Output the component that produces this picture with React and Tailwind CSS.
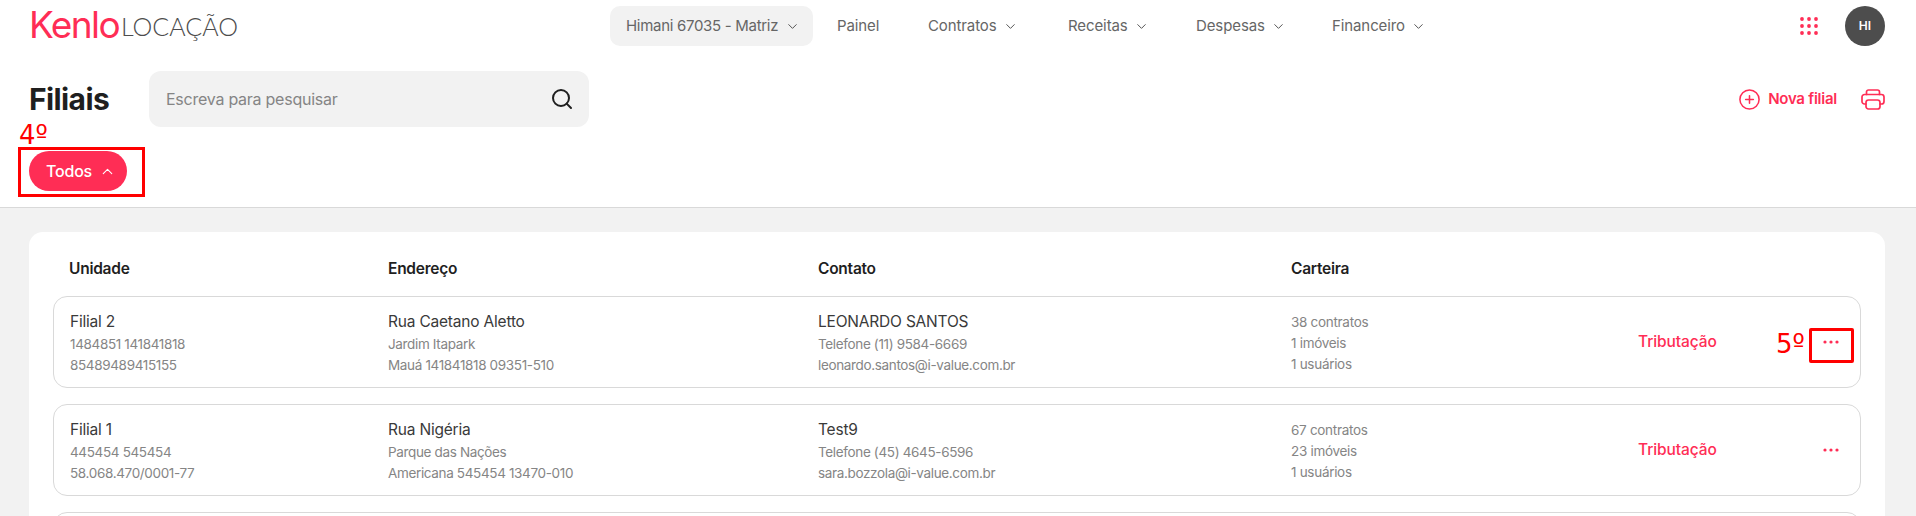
import React from "react";
import { ChevronDown, ChevronUp, Search, CirclePlus } from "lucide-react";

const rows = [
  { u: ["Filial 2", "1484851 141841818", "85489489415155"], e: ["Rua Caetano Aletto", "Jardim Itapark", "Mauá 141841818 09351-510"], c: ["LEONARDO SANTOS", "Telefone (11) 9584-6669", "leonardo.santos@i-value.com.br"], w: ["38 contratos", "1 imóveis", "1 usuários"] },
  { u: ["Filial 1", "445454 545454", "58.068.470/0001-77"], e: ["Rua Nigéria", "Parque das Nações", "Americana 545454 13470-010"], c: ["Test9", "Telefone (45) 4645-6596", "sara.bozzola@i-value.com.br"], w: ["67 contratos", "23 imóveis", "1 usuários"] },
];

const cols = "grid grid-cols-[318px_430px_473px_347px_185px_1fr] items-center";

function NavItem({ label, width, chevron = true }) {
  return (
    <div className={`flex items-center gap-[6px] text-[15px] tracking-[-0.1px] text-[#666666] ${width}`}>
      <span>{label}</span>
      {chevron && <ChevronDown size={15} strokeWidth={1.6} className="text-[#555555]" />}
    </div>
  );
}

function Stack({ lines }) {
  return (
    <div className="flex flex-col pt-[2px]">
      <span className="text-[15.5px] leading-[24px] tracking-[-0.2px] text-[#3a3a3a] whitespace-nowrap">{lines[0]}</span>
      <span className="text-[13.5px] leading-[21px] tracking-[-0.35px] text-[#858585] whitespace-nowrap">{lines[1]}</span>
      <span className="text-[13.5px] leading-[21px] tracking-[-0.35px] text-[#858585] whitespace-nowrap">{lines[2]}</span>
    </div>
  );
}

function Dots() {
  return (
    <svg width="16" height="4" viewBox="0 0 16 4" fill="#ff2d55">
      <circle cx="2" cy="2" r="1.6" />
      <circle cx="8" cy="2" r="1.6" />
      <circle cx="14" cy="2" r="1.6" />
    </svg>
  );
}

function GridDots() {
  const c = [2, 9, 16];
  return (
    <svg width="18" height="18" viewBox="0 0 18 18" fill="#ff2d55">
      {c.map((y) => c.map((x) => <circle key={`${x}-${y}`} cx={x} cy={y} r="1.9" />))}
    </svg>
  );
}

function PrinterIcon() {
  return (
    <svg width="24" height="21" viewBox="0 0 24 21" fill="none" stroke="#ff2d55" strokeWidth="1.7" strokeLinejoin="round" strokeLinecap="round">
      <path d="M5.5 5.5V3a2 2 0 0 1 2-2h9a2 2 0 0 1 2 2v2.5" />
      <path d="M5 15H3.5A2.5 2.5 0 0 1 1 12.5V8a2.5 2.5 0 0 1 2.5-2.5h17A2.5 2.5 0 0 1 23 8v4.5a2.5 2.5 0 0 1-2.5 2.5H19" />
      <rect x="5" y="11" width="14" height="9" rx="2.5" />
    </svg>
  );
}

export default function App() {
  return (
    <div className="relative h-screen overflow-hidden bg-[#f2f2f2] font-['Inter',sans-serif]">
      <div className="border-b border-[#d9d9d9] bg-white">
        <nav className="flex h-[52px] items-center pl-[29px] pr-[31px]">
          <div className="flex w-[581px] items-center pb-[3px]">
            <span className="text-[37px] font-normal leading-[40px] tracking-[-1.6px] text-[#ff2d55]">Kenlo</span>
            <span className="ml-[2px] mt-[2px] font-['Lato',sans-serif] text-[25px] font-light leading-[40px] text-[#4d4d4d]">LOCAÇÃO</span>
          </div>
          <div className="flex h-[40px] w-[203px] items-center gap-[7px] rounded-[10px] bg-[#f2f2f2] pl-[16px] text-[15px] tracking-[-0.3px] text-[#666666]">
            <span className="whitespace-nowrap">Himani 67035 - Matriz</span>
            <ChevronDown size={15} strokeWidth={1.6} className="text-[#555555]" />
          </div>
          <div className="ml-[24px] flex items-center">
            <NavItem label="Painel" width="w-[91px]" chevron={false} />
            <NavItem label="Contratos" width="w-[140px]" />
            <NavItem label="Receitas" width="w-[128px]" />
            <NavItem label="Despesas" width="w-[136px]" />
            <NavItem label="Financeiro" width="w-[100px]" />
          </div>
          <div className="ml-auto flex items-center gap-[27px]">
            <GridDots />
            <div className="flex h-[40px] w-[40px] items-center justify-center rounded-full bg-[#4d4d4d] text-[12px] font-semibold text-white">HI</div>
          </div>
        </nav>

        <div className="flex items-center pl-[29px] pr-[31px] pt-[19px]">
          <h1 className="w-[120px] text-[30px] font-bold leading-[36px] tracking-[-0.6px] text-[#1f1f1f]">Filiais</h1>
          <div className="flex h-[56px] w-[440px] items-center justify-between rounded-[12px] bg-[#f2f2f2] pl-[17px] pr-[15px]">
            <span className="text-[16px] tracking-[-0.25px] text-[#858585]">Escreva para pesquisar</span>
            <Search size={24} strokeWidth={2} className="text-[#1f1f1f]" />
          </div>
          <div className="ml-auto flex items-center text-[#ff2d55]">
            <CirclePlus size={23} strokeWidth={1.6} />
            <span className="ml-[7px] text-[15px] font-semibold tracking-[-0.25px]">Nova filial</span>
            <div className="ml-[24px]"><PrinterIcon /></div>
          </div>
        </div>

        <div className="pl-[29px] pb-[16px] pt-[24px]">
          <button className="flex h-[40px] w-[98px] items-center gap-[7px] rounded-full bg-[#ff2d55] pl-[17px] text-[16px] font-medium tracking-[-0.2px] text-white">
            Todos
            <ChevronUp size={17} strokeWidth={1.6} />
          </button>
        </div>
      </div>

      <div className="pl-[29px] pr-[31px] pt-[24px]">
        <div className="rounded-[14px] bg-white px-[24px] pt-[24px]">
          <div className={`${cols} mb-[16px] h-[24px] px-[17px] pt-[1px] text-[15.5px] font-semibold tracking-[-0.25px] text-[#1f1f1f]`}>
            <span className="-ml-[1px]">Unidade</span>
            <span>Endereço</span>
            <span>Contato</span>
            <span>Carteira</span>
          </div>
          <div className="flex flex-col gap-[16px]">
            {rows.map((r) => (
              <div key={r.u[0]} className={`${cols} h-[92px] rounded-[14px] border border-[#d9d9d9] px-[16px]`}>
                <Stack lines={r.u} />
                <Stack lines={r.e} />
                <Stack lines={r.c} />
                <div className="flex flex-col pt-[2px] text-[13.5px] leading-[21px] tracking-[-0.3px] text-[#858585]">
                  {r.w.map((t) => <span key={t}>{t}</span>)}
                </div>
                <span className="text-[15.5px] font-medium tracking-[-0.1px] text-[#ff2d55]">Tributação</span>
                <Dots />
              </div>
            ))}
            <div className="h-[92px] rounded-[14px] border border-[#d9d9d9]" />
          </div>
        </div>
      </div>

      {/* Red annotations drawn over the screenshot */}
      <span className="absolute left-[19px] top-[117px] font-['DejaVu_Sans',sans-serif] text-[26px] leading-[36px] text-[#ff0000]">4º</span>
      <div className="absolute left-[18px] top-[147px] h-[50px] w-[127px] border-[3px] border-[#ff0000]" />
      <span className="absolute left-[1776px] top-[326px] font-['DejaVu_Sans',sans-serif] text-[26px] leading-[36px] text-[#ff0000]">5º</span>
      <div className="absolute left-[1809px] top-[328px] h-[35px] w-[45px] rounded-[2px] border-[3px] border-[#ff0000]" />
    </div>
  );
}
